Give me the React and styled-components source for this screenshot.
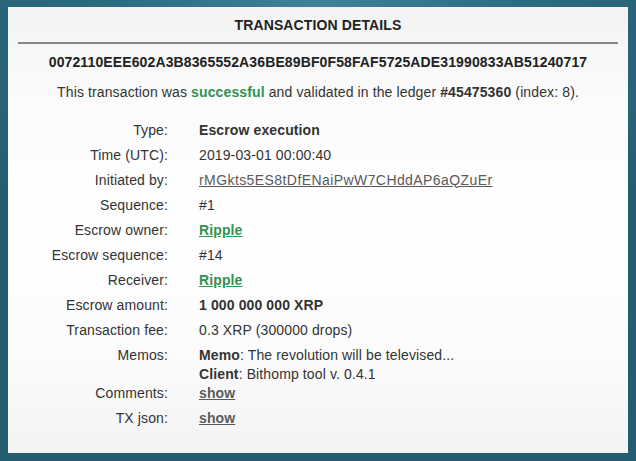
import React from "react";
import styled, { createGlobalStyle } from "styled-components";

const Global = createGlobalStyle`
  html, body { margin: 0; padding: 0; }
  body {
    width: 636px;
    height: 461px;
    overflow: hidden;
    font-family: "Liberation Sans", Arial, sans-serif;
    background: radial-gradient(ellipse 70% 60% at 50% 0%, #3f8298 0%, #2d6c80 45%, #245d70 100%);
  }
`;

const Page = styled.div`
  box-sizing: border-box;
  width: 636px;
  height: 461px;
  padding: 7px 8px 8px 8px;
  display: flex;
`;

const Card = styled.div`
  flex: 1;
  background: linear-gradient(#f3f3f3 0%, #fbfbfb 20%, #ffffff 50%, #fbfbfb 80%, #f3f3f3 100%);
  padding: 8px 10px 0 10px;
  color: #333;
  font-size: 14px;
  line-height: 20px;
  letter-spacing: 0.12px;
  display: flex;
  flex-direction: column;
`;

const Title = styled.h1`
  margin: 0;
  font-size: 14px;
  line-height: 20px;
  font-weight: bold;
  text-align: center;
  color: #222;
  padding-bottom: 7px;
  border-bottom: 2px solid #888;
`;

const Hash = styled.div`
  margin-top: 8px;
  font-weight: bold;
  text-align: center;
  color: #222;
`;

const Status = styled.p`
  margin: 10px 0 0;
  text-align: center;
`;

const Strong = styled.b`
  font-weight: bold;
  color: ${(p) => (p.$green ? "#2f9450" : "#333")};
`;

const Details = styled.div`
  margin-top: 15.5px;
  display: flex;
  flex-direction: column;
`;

const Row = styled.div`
  display: grid;
  grid-template-columns: 150px 1fr;
  column-gap: 31px;
  line-height: 19px;
  padding: ${(p) => (p.$tight ? "3px 0 0" : "3px 0")};
  margin-bottom: ${(p) => (p.$tight ? "-3px" : "0")};
`;

const Label = styled.div`
  text-align: right;
`;

const Value = styled.div`
  font-weight: ${(p) => (p.$bold ? "bold" : "normal")};
`;

const Link = styled.a`
  color: ${(p) => (p.$green ? "#2f9450" : "#5a5a5a")};
  font-weight: ${(p) => (p.$bold ? "bold" : "normal")};
  letter-spacing: ${(p) => (p.$wide ? "0.42px" : "inherit")};
  text-decoration: underline;
  cursor: pointer;
`;

const Line = styled.div``;

export default function App() {
  return (
    <>
      <Global />
      <Page>
        <Card>
          <Title>TRANSACTION DETAILS</Title>
          <Hash>0072110EEE602A3B8365552A36BE89BF0F58FAF5725ADE31990833AB51240717</Hash>
          <Status>
            This transaction was <Strong $green>successful</Strong> and validated in the ledger{" "}
            <Strong>#45475360</Strong> (index: 8).
          </Status>
          <Details>
            <Row>
              <Label>Type:</Label>
              <Value $bold>Escrow execution</Value>
            </Row>
            <Row>
              <Label>Time (UTC):</Label>
              <Value>2019-03-01 00:00:40</Value>
            </Row>
            <Row>
              <Label>Initiated by:</Label>
              <Value>
                <Link $wide>rMGkts5ES8tDfENaiPwW7CHddAP6aQZuEr</Link>
              </Value>
            </Row>
            <Row>
              <Label>Sequence:</Label>
              <Value>#1</Value>
            </Row>
            <Row>
              <Label>Escrow owner:</Label>
              <Value>
                <Link $green $bold>Ripple</Link>
              </Value>
            </Row>
            <Row>
              <Label>Escrow sequence:</Label>
              <Value>#14</Value>
            </Row>
            <Row>
              <Label>Receiver:</Label>
              <Value>
                <Link $green $bold>Ripple</Link>
              </Value>
            </Row>
            <Row>
              <Label>Escrow amount:</Label>
              <Value $bold>1 000 000 000 XRP</Value>
            </Row>
            <Row>
              <Label>Transaction fee:</Label>
              <Value>0.3 XRP (300000 drops)</Value>
            </Row>
            <Row $tight>
              <Label>Memos:</Label>
              <Value>
                <Line>
                  <Strong>Memo</Strong>: The revolution will be televised...
                </Line>
                <Line>
                  <Strong>Client</Strong>: Bithomp tool v. 0.4.1
                </Line>
              </Value>
            </Row>
            <Row>
              <Label>Comments:</Label>
              <Value>
                <Link $bold>show</Link>
              </Value>
            </Row>
            <Row>
              <Label>TX json:</Label>
              <Value>
                <Link $bold>show</Link>
              </Value>
            </Row>
          </Details>
        </Card>
      </Page>
    </>
  );
}
